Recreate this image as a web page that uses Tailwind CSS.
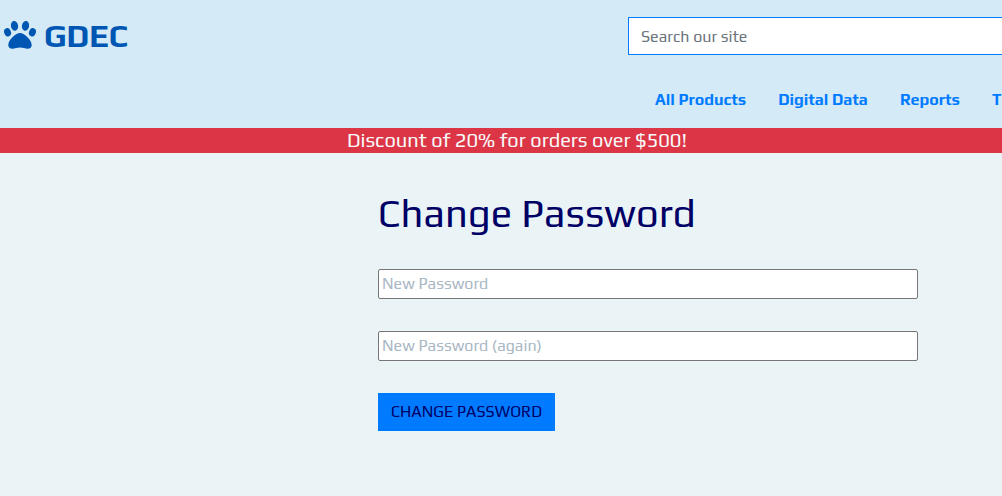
<!DOCTYPE html>
<html lang="en">
<head>
<meta charset="utf-8">
<meta name="viewport" content="width=device-width, initial-scale=1">
<title>Change Password</title>
<script src="https://cdn.jsdelivr.net/npm/@tailwindcss/browser@4"></script>
</head>
<body class="min-h-screen overflow-x-hidden bg-[#eaf4f7] font-['Play','Noto_Sans',sans-serif] text-base text-[#000066]">
<header class="overflow-hidden bg-[#d4eaf7] pt-4 pb-4">
  <div class="flex items-start">
    <a href="#" class="flex w-[628px] shrink-0 items-center gap-2 pl-1 text-[32px] leading-10 font-bold text-[#0056b3]">
      <svg class="h-8 w-8" viewBox="0 0 32 32" fill="currentColor" aria-hidden="true">
        <ellipse cx="10.500" cy="5.900" rx="3.600" ry="4.900" transform="rotate(-10 10.500 5.900)"/>
        <ellipse cx="21.500" cy="5.900" rx="3.600" ry="4.900" transform="rotate(10 21.500 5.900)"/>
        <ellipse cx="3.600" cy="12.300" rx="3.400" ry="4.200" transform="rotate(-20 3.600 12.300)"/>
        <ellipse cx="28.400" cy="12.300" rx="3.400" ry="4.200" transform="rotate(20 28.400 12.300)"/>
        <path d="M16 13C11.500 13 4.300 20 4.300 25C4.300 27.500 6 28.800 8.200 28.800C11 28.800 13 27.600 16 27.600S21 28.800 23.800 28.800C26 28.800 27.700 27.500 27.700 25C27.700 20 20.500 13 16 13Z"/>
      </svg>
      <span>GDEC</span>
    </a>
    <form class="mt-px flex min-w-[500px] grow">
      <input type="search" aria-label="Search our site" placeholder="Search our site" class="h-[38px] w-full appearance-none border border-[#007bff] bg-white px-3 placeholder:text-[#6c757d]">
    </form>
  </div>
  <nav class="ml-[655px] mt-8 flex h-6 items-center gap-8 font-bold whitespace-nowrap text-[#007bff]">
    <a href="#">All Products</a>
    <a href="#">Digital Data</a>
    <a href="#">Reports</a>
    <a href="#">T</a>
  </nav>
</header>
<p class="bg-[#dc3545] pb-px pl-8 text-center text-[20px] leading-6 text-[#f8f9fa]">Discount of 20% for orders over $500!</p>
<main class="ml-[378px] max-w-[540px] pt-9">
  <h1 class="text-[40px] leading-12 whitespace-nowrap">Change Password</h1>
  <form class="mt-8 flex flex-col items-start gap-8">
    <input type="password" aria-label="New Password" placeholder="New Password" class="h-[30px] w-full rounded-[2px] border border-[#767676] bg-white px-[3px] pb-0.5 placeholder:text-[#aab7c4]">
    <input type="password" aria-label="New Password (again)" placeholder="New Password (again)" class="h-[30px] w-full rounded-[2px] border border-[#767676] bg-white px-[3px] pb-0.5 placeholder:text-[#aab7c4]">
    <button type="submit" class="h-[38px] bg-[#007bff] px-[13px] whitespace-nowrap uppercase">Change Password</button>
  </form>
</main>
</body>
</html>
